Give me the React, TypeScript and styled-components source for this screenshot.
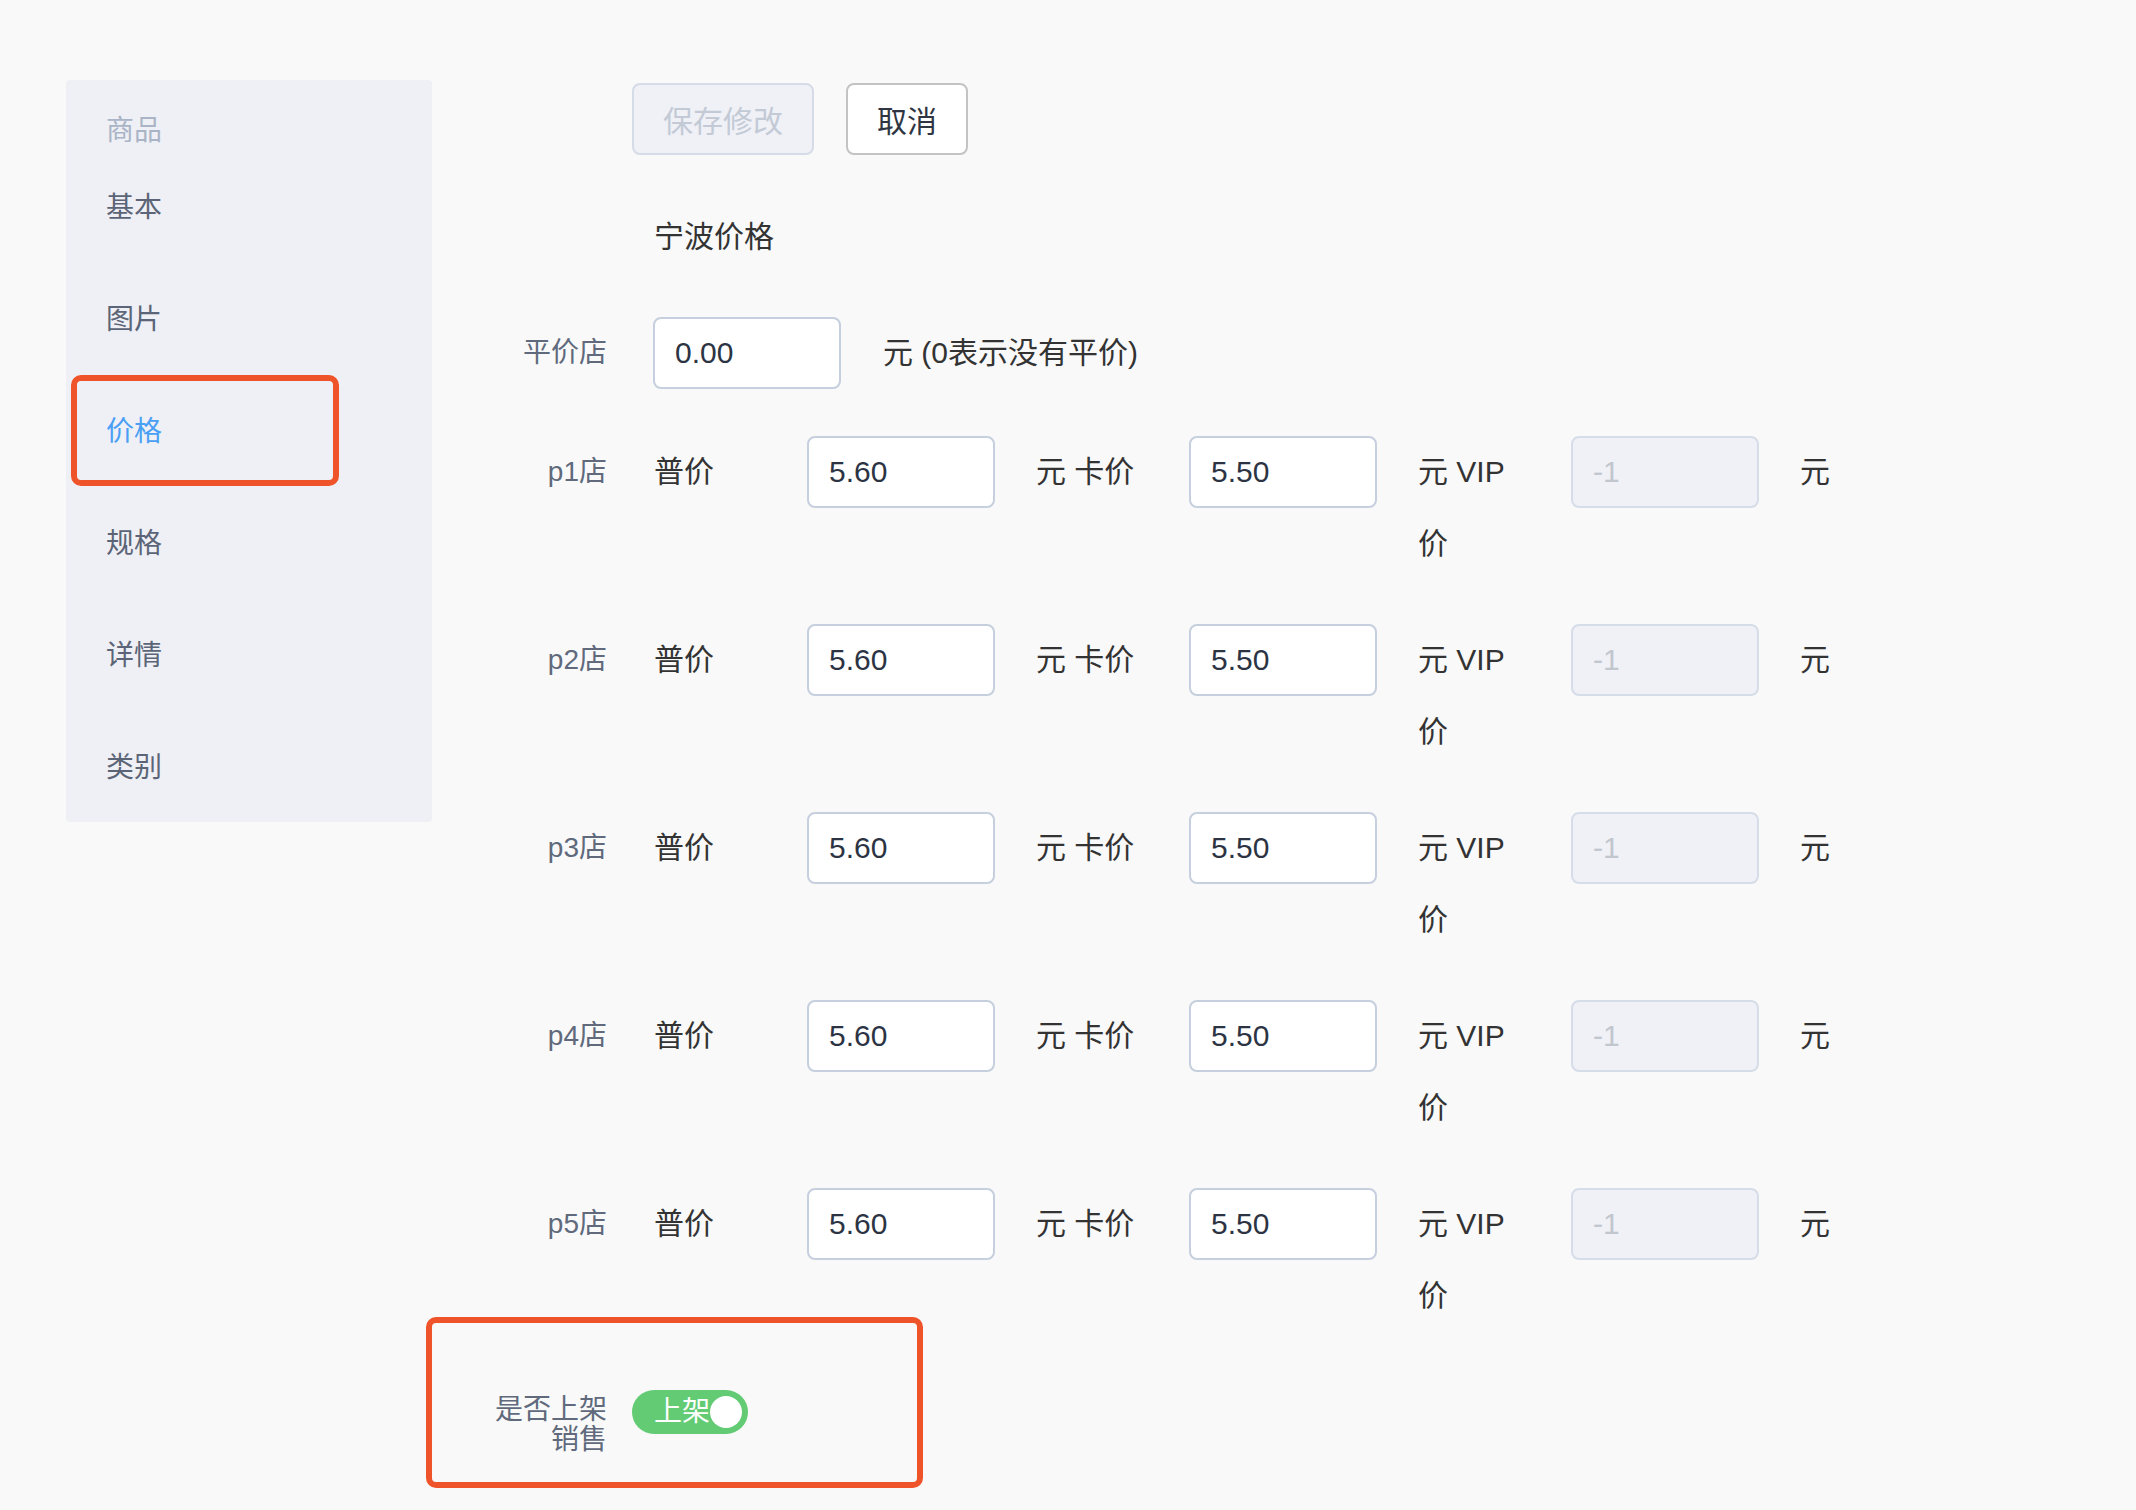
import React from "react";
import styled, { createGlobalStyle, css } from "styled-components";

const GlobalStyle = createGlobalStyle`
  html, body {
    margin: 0;
    padding: 0;
    background: #f9f9f9;
  }
  body {
    font-family: "Liberation Sans", "Noto Sans CJK SC", sans-serif;
    color: #333333;
  }
  *, *::before, *::after { box-sizing: border-box; }
`;

const Page = styled.div`
  display: flex;
  align-items: flex-start;
  padding: 80px 0 0 66px;
  min-height: 1510px;
`;

const Sidebar = styled.nav`
  flex-shrink: 0;
  width: 366px;
  height: 742px;
  background: #eff0f5;
  border-radius: 4px;
  display: flex;
  flex-direction: column;
  overflow: hidden;
`;

const SideHeader = styled.div`
  padding: 33px 0 0 40px;
  margin-bottom: 3px;
  line-height: 36px;
  font-size: 28px;
  color: #a9b4c6;
`;

const markBox = css`
  &::after {
    content: "";
    position: absolute;
    border: 6px solid #ef5329;
    border-radius: 10px;
    pointer-events: none;
  }
`;

const SideItem = styled.div<{ $active?: boolean; $marked?: boolean }>`
  position: relative;
  flex-shrink: 0;
  height: 112px;
  line-height: 112px;
  padding-left: 40px;
  font-size: 28px;
  color: ${(p) => (p.$active ? "#4a9ff5" : "#5b6577")};
  ${(p) =>
    p.$marked &&
    css`
      ${markBox}
      &::after {
        left: 5px;
        top: -1px;
        width: 268px;
        height: 111px;
      }
    `}
`;

const Form = styled.div`
  margin-left: 40px;
  padding-top: 3px;
  display: flex;
  flex-direction: column;
`;

const FormItem = styled.div<{ $gap?: number; $marked?: boolean }>`
  position: relative;
  display: flex;
  align-items: flex-start;
  margin-bottom: ${(p) => p.$gap ?? 44}px;
  ${(p) =>
    p.$marked &&
    css`
      ${markBox}
      &::after {
        left: -46px;
        top: -59px;
        width: 497px;
        height: 171px;
      }
    `}
`;

const Label = styled.label<{ $tight?: boolean }>`
  flex-shrink: 0;
  width: 160px;
  padding-right: 25px;
  text-align: right;
  font-size: 28px;
  color: #606a7c;
  line-height: ${(p) => (p.$tight ? "30px" : "72px")};
  padding-top: ${(p) => (p.$tight ? "19px" : "0")};
`;

const Content = styled.div<{ $indent?: number }>`
  flex: 1;
  padding-left: ${(p) => p.$indent ?? 0}px;
  line-height: 72px;
  font-size: 30px;
  color: #333333;
`;

const ButtonBar = styled.div`
  display: flex;
  gap: 32px;
`;

const Button = styled.button<{ $disabled?: boolean }>`
  height: 72px;
  padding: 0 29px;
  border-radius: 8px;
  font-family: inherit;
  font-size: 30px;
  cursor: pointer;
  border: 2px solid ${(p) => (p.$disabled ? "#d5dce7" : "#c3c3c3")};
  background: ${(p) => (p.$disabled ? "#eff1f6" : "#ffffff")};
  color: ${(p) => (p.$disabled ? "#c3cad6" : "#2f3542")};
`;

const Title = styled.div`
  font-size: 30px;
  color: #333333;
`;

const InlineRow = styled.div`
  display: flex;
  align-items: flex-start;
  gap: 42px;
`;

const PriceGrid = styled.div`
  display: grid;
  grid-template-columns: 112px 188px 112px 188px 112px 188px auto;
  column-gap: 41px;
  align-items: start;
`;

const Cell = styled.span`
  font-size: 30px;
  line-height: 72px;
  color: #333333;
`;

const Input = styled.input`
  display: block;
  width: 188px;
  height: 72px;
  padding: 0 20px;
  border: 2px solid #c5cfdd;
  border-radius: 8px;
  background: #ffffff;
  font-family: inherit;
  font-size: 30px;
  color: #2c3444;
  outline: none;

  &:disabled {
    background: #eff1f6;
    border-color: #d6dde8;
    color: #c2c6cd;
  }
`;

const Switch = styled.div`
  display: inline-flex;
  align-items: center;
  width: 116px;
  height: 44px;
  padding: 0 6px 0 22px;
  border-radius: 22px;
  background: #62cb74;
  cursor: pointer;
`;

const SwitchText = styled.span`
  font-size: 28px;
  line-height: 44px;
  color: #ffffff;
  width: 56px;
`;

const Knob = styled.span`
  width: 32px;
  height: 32px;
  border-radius: 50%;
  background: #ffffff;
`;

const SwitchWrap = styled.div`
  display: flex;
  align-items: center;
  height: 72px;
`;

const navItems = ["基本", "图片", "价格", "规格", "详情", "类别"];
const shops = ["p1店", "p2店", "p3店", "p4店", "p5店"];

export default function App() {
  return (
    <>
      <GlobalStyle />
      <Page>
        <Sidebar>
          <SideHeader>商品</SideHeader>
          {navItems.map((n) => (
            <SideItem key={n} $active={n === "价格"} $marked={n === "价格"}>
              {n}
            </SideItem>
          ))}
        </Sidebar>

        <Form>
          <FormItem $gap={46}>
            <Label />
            <Content>
              <ButtonBar>
                <Button $disabled>保存修改</Button>
                <Button>取消</Button>
              </ButtonBar>
            </Content>
          </FormItem>

          <FormItem>
            <Label />
            <Content $indent={22}>
              <Title>宁波价格</Title>
            </Content>
          </FormItem>

          <FormItem $gap={47}>
            <Label>平价店</Label>
            <Content $indent={21}>
              <InlineRow>
                <Input defaultValue="0.00" />
                <Cell>元 (0表示没有平价)</Cell>
              </InlineRow>
            </Content>
          </FormItem>

          {shops.map((s) => (
            <FormItem key={s}>
              <Label>{s}</Label>
              <Content $indent={22}>
                <PriceGrid>
                  <Cell>普价</Cell>
                  <Input defaultValue="5.60" />
                  <Cell>元 卡价</Cell>
                  <Input defaultValue="5.50" />
                  <Cell>元 VIP 价</Cell>
                  <Input disabled defaultValue="-1" />
                  <Cell>元</Cell>
                </PriceGrid>
              </Content>
            </FormItem>
          ))}

          <FormItem $marked>
            <Label $tight>是否上架销售</Label>
            <Content>
              <SwitchWrap>
                <Switch role="switch" aria-checked="true">
                  <SwitchText>上架</SwitchText>
                  <Knob />
                </Switch>
              </SwitchWrap>
            </Content>
          </FormItem>
        </Form>
      </Page>
    </>
  );
}
